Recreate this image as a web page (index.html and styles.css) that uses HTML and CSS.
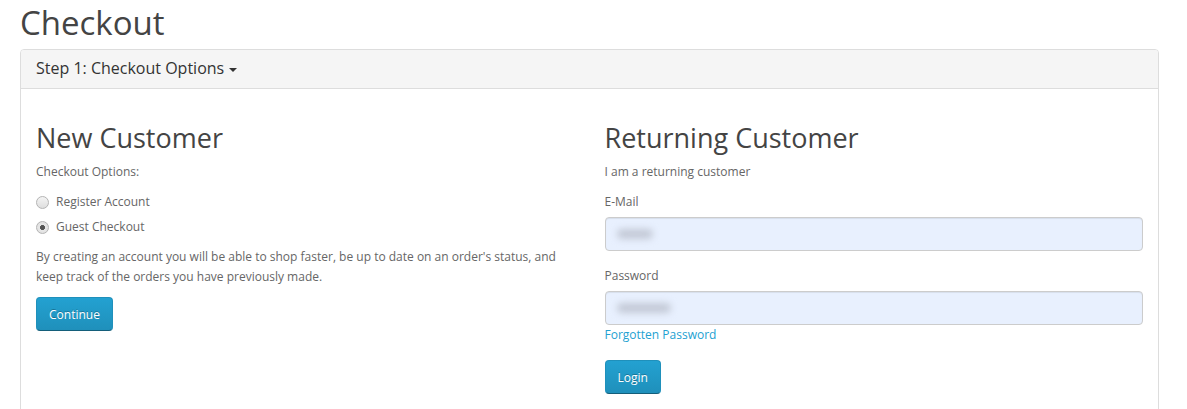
FILE: index.html
```html
<!DOCTYPE html>
<html lang="en">
<head>
  <meta charset="UTF-8"/>
  <title>Checkout</title>
  <link rel="stylesheet" href="styles.css">
</head>
<body>
  <div class="container">
    <h1>Checkout</h1>

    <div class="panel">
      <div class="panel-heading">
        <span class="panel-title">Step 1: Checkout Options <i class="caret"></i></span>
      </div>
      <div class="panel-body">
        <div class="row">
          <div class="col">
            <h2>New Customer</h2>
            <p>Checkout Options:</p>
            <div class="radio">
              <label><input type="radio" name="account" value="register"> Register Account</label>
            </div>
            <div class="radio">
              <label><input type="radio" name="account" value="guest" checked> Guest Checkout</label>
            </div>
            <p>By creating an account you will be able to shop faster, be up to date on an order's status, and keep track of the orders you have previously made.</p>
            <button class="btn">Continue</button>
          </div>

          <div class="col">
            <h2>Returning Customer</h2>
            <p>I am a returning customer</p>
            <div class="form-group">
              <label class="control-label" for="input-email">E-Mail</label>
              <div class="field">
                <input type="text" id="input-email" class="form-control">
                <span class="blur short"></span>
              </div>
            </div>
            <div class="form-group">
              <label class="control-label" for="input-password">Password</label>
              <div class="field">
                <input type="password" id="input-password" class="form-control">
                <span class="blur long"></span>
              </div>
              <a href="#" class="link">Forgotten Password</a>
            </div>
            <button class="btn">Login</button>
          </div>
        </div>
      </div>
    </div>
  </div>
</body>
</html>
```

FILE: styles.css
```css
* {
  box-sizing: border-box;
}

body {
  margin: 0;
  font-family: 'Open Sans', sans-serif;
  font-size: 12px;
  line-height: 20px;
  color: #666;
  background: #fff;
}

.container {
  padding: 0 28px 0 20px;
}

h1, h2 {
  font-weight: 400;
  color: #444;
  line-height: 1.1;
}

h1 {
  font-size: 33px;
  line-height: 46px;
  margin: 0 0 3px;
}

h2 {
  font-size: 27px;
  margin: 19px 0 10px;
}

p {
  margin: 0 0 10px;
}

.panel {
  border: 1px solid #ddd;
  border-radius: 4px;
  background: #fff;
  height: 400px;
}

.panel-heading {
  background: #f5f5f5;
  border-bottom: 1px solid #ddd;
  border-radius: 3px 3px 0 0;
  padding: 10px 15px;
  font-size: 16px;
  line-height: 1.1;
}

.panel-title {
  color: #333;
}

.caret {
  display: inline-block;
  width: 0;
  height: 0;
  margin-left: 1px;
  vertical-align: middle;
  border-top: 4px solid #333;
  border-left: 4px solid transparent;
  border-right: 4px solid transparent;
}

.panel-body {
  padding: 15px;
}

.row {
  display: grid;
  grid-template-columns: 1fr 1fr;
  margin: 0 -15px;
}

.col {
  padding: 0 15px;
}

.radio {
  margin: 10px 0;
}

.radio + .radio {
  margin-top: -5px;
}

.radio label {
  display: block;
  padding-left: 20px;
  min-height: 20px;
  cursor: pointer;
}

/* old-style grey radios, as in the screenshot */
.radio input {
  appearance: none;
  float: left;
  width: 13px;
  height: 13px;
  margin: 4px 0 0 -20px;
  border: 1px solid #b4b4b4;
  border-radius: 50%;
  background: linear-gradient(to bottom, #f4f4f4, #dedede);
}

.radio input:checked {
  background: radial-gradient(circle, #555 0, #555 2.2px, #e8e8e8 2.8px, #dcdcdc);
}

.btn {
  display: inline-block;
  font-family: inherit;
  font-size: 12px;
  line-height: 1.42857;
  padding: 7.5px 12px;
  color: #fff;
  text-shadow: 0 -1px 0 rgba(0, 0, 0, 0.25);
  background: linear-gradient(to bottom, #23a1d1, #1f90bb);
  border: 1px solid #1f90bb;
  border-bottom-color: #145e7a;
  border-radius: 4px;
  cursor: pointer;
}

.form-group {
  margin-bottom: 15px;
}

.control-label {
  display: inline-block;
  margin-bottom: 5px;
}

/* wrapper so the blurred autofill value can sit over the input */
.field {
  position: relative;
}

.form-control {
  display: block;
  width: 100%;
  height: 34px;
  padding: 6px 12px;
  font-family: inherit;
  font-size: 12px;
  color: #555;
  background: #e8f0fe;
  border: 1px solid #ccc;
  border-radius: 4px;
  box-shadow: inset 0 1px 1px rgba(0, 0, 0, 0.075);
  outline: none;
}

.blur {
  position: absolute;
  top: 12px;
  left: 12px;
  height: 10px;
  border-radius: 5px;
  background: #c3c9d6;
  filter: blur(3.5px);
}

.blur.short {
  width: 36px;
}

.blur.long {
  width: 54px;
}

.link {
  color: #23a1d1;
  text-decoration: none;
}
```
